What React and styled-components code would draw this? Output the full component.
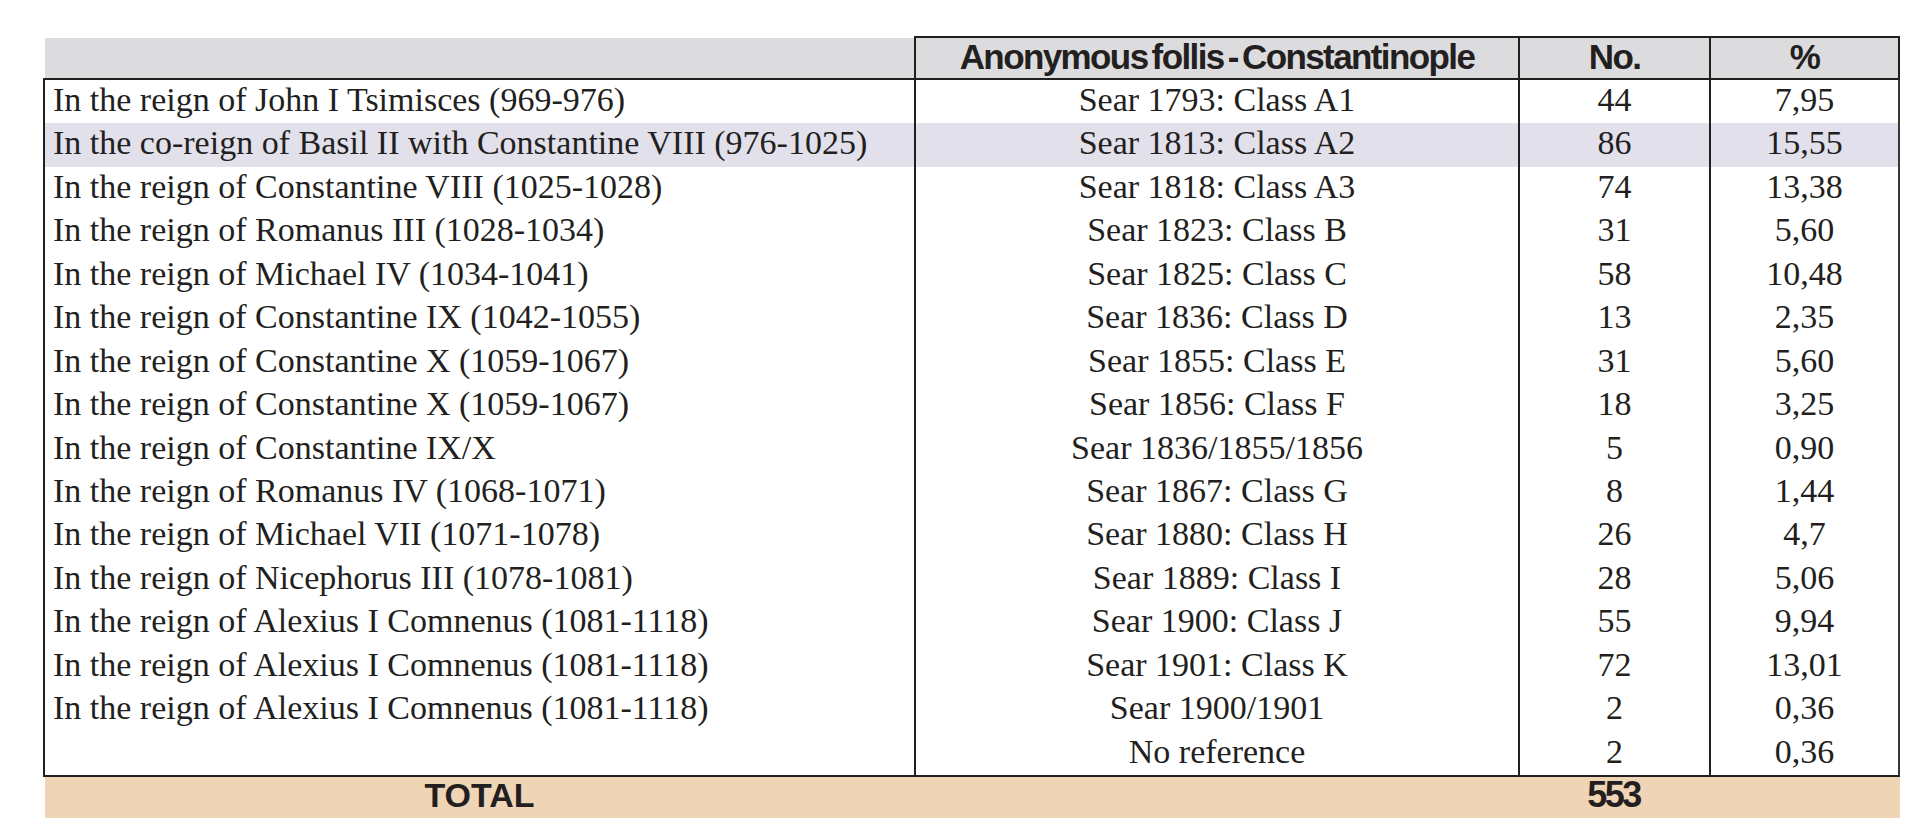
import React from "react";
import styled, { createGlobalStyle, css } from "styled-components";

const Global = createGlobalStyle`
  html, body { margin: 0; padding: 0; background: #ffffff; }
  body { color: #231f20; }
`;

const INK = "#231f20";
const COLS = "871px 604px 191px 191px";

const Page = styled.div`
  padding: 36px 0 0 43px;
  width: 1920px;
  height: 837px;
  box-sizing: border-box;
  overflow: hidden;
`;

const Table = styled.div`
  width: 1857px;
  display: flex;
  flex-direction: column;
`;

const HeaderRow = styled.div`
  display: grid;
  grid-template-columns: ${COLS};
  height: 44px;
  border-bottom: 2px solid ${INK};
  box-sizing: border-box;
`;

const HeadCell = styled.div`
  box-sizing: border-box;
  background: #dcdcde;
  background-clip: padding-box;
  border-top: 2px solid ${(p) => (p.$blank ? "transparent" : INK)};
  border-left: 2px solid ${(p) => (p.$blank ? "transparent" : INK)};
  ${(p) => p.$last && css`border-right: 2px solid ${INK};`}
  font-family: "Liberation Sans", Arial, sans-serif;
  font-weight: 700;
  font-size: 35px;
  letter-spacing: -1.6px;
  word-spacing: -4px;
  line-height: 37px;
  text-align: center;
  white-space: nowrap;
`;

const Body = styled.div`
  display: flex;
  flex-direction: column;
  border-bottom: 2px solid ${INK};
`;

const Row = styled.div`
  display: grid;
  grid-template-columns: ${COLS};
  height: 43.44px;
  background: ${(p) => (p.$shade ? "#e2e0eb" : "transparent")};
`;

const Cell = styled.div`
  box-sizing: border-box;
  border-left: 2px solid ${INK};
  ${(p) => p.$last && css`border-right: 2px solid #3a3638;`}
  font-family: "Liberation Serif", "Times New Roman", serif;
  font-size: 34px;
  line-height: 40px;
  white-space: nowrap;
  text-align: ${(p) => (p.$left ? "left" : "center")};
  padding-left: ${(p) => (p.$left ? "8px" : "0")};
`;

const TotalRow = styled.div`
  display: grid;
  grid-template-columns: 869px 604px 191px 191px;
  margin-left: 2px;
  height: 41px;
  background: #efd5b6;
  font-family: "Liberation Sans", Arial, sans-serif;
  font-weight: 700;
  line-height: 36px;
  text-align: center;
`;

const TotalLabel = styled.div`
  font-size: 34px;
  letter-spacing: 0;
`;

const TotalValue = styled.div`
  font-size: 36px;
  letter-spacing: -2.5px;
`;

const rows = [
  ["In the reign of John I Tsimisces (969-976)", "Sear 1793: Class A1", "44", "7,95"],
  ["In the co-reign of Basil II with Constantine VIII (976-1025)", "Sear 1813: Class A2", "86", "15,55", true],
  ["In the reign of Constantine VIII (1025-1028)", "Sear 1818: Class A3", "74", "13,38"],
  ["In the reign of Romanus III (1028-1034)", "Sear 1823: Class B", "31", "5,60"],
  ["In the reign of Michael IV (1034-1041)", "Sear 1825: Class C", "58", "10,48"],
  ["In the reign of Constantine IX (1042-1055)", "Sear 1836: Class D", "13", "2,35"],
  ["In the reign of Constantine X (1059-1067)", "Sear 1855: Class E", "31", "5,60"],
  ["In the reign of Constantine X (1059-1067)", "Sear 1856: Class F", "18", "3,25"],
  ["In the reign of Constantine IX/X", "Sear 1836/1855/1856", "5", "0,90"],
  ["In the reign of Romanus IV (1068-1071)", "Sear 1867: Class G", "8", "1,44"],
  ["In the reign of Michael VII (1071-1078)", "Sear 1880: Class H", "26", "4,7"],
  ["In the reign of Nicephorus III (1078-1081)", "Sear 1889: Class I", "28", "5,06"],
  ["In the reign of Alexius I Comnenus (1081-1118)", "Sear 1900: Class J", "55", "9,94"],
  ["In the reign of Alexius I Comnenus (1081-1118)", "Sear 1901: Class K", "72", "13,01"],
  ["In the reign of Alexius I Comnenus (1081-1118)", "Sear 1900/1901", "2", "0,36"],
  ["", "No reference", "2", "0,36"],
];

export default function App() {
  return (
    <>
      <Global />
      <Page>
        <Table>
          <HeaderRow>
            <HeadCell $blank />
            <HeadCell>Anonymous follis - Constantinople</HeadCell>
            <HeadCell>No.</HeadCell>
            <HeadCell $last>%</HeadCell>
          </HeaderRow>
          <Body>
            {rows.map(([reign, ref, no, pct, shade], i) => (
              <Row key={i} $shade={shade}>
                <Cell $left>{reign}</Cell>
                <Cell>{ref}</Cell>
                <Cell>{no}</Cell>
                <Cell $last>{pct}</Cell>
              </Row>
            ))}
          </Body>
          <TotalRow>
            <TotalLabel>TOTAL</TotalLabel>
            <div />
            <TotalValue>553</TotalValue>
            <div />
          </TotalRow>
        </Table>
      </Page>
    </>
  );
}
